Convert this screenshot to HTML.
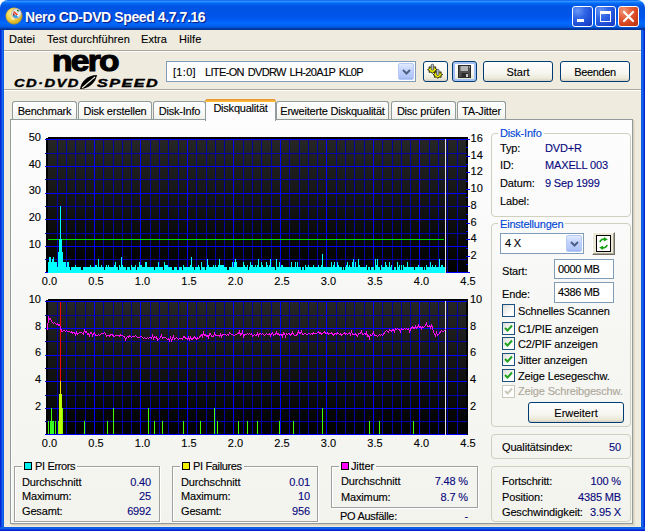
<!DOCTYPE html>
<html lang="de"><head><meta charset="utf-8"><title>Nero CD-DVD Speed 4.7.7.16</title>
<style>
html,body{margin:0;padding:0;background:#fff;}
body{width:645px;height:531px;overflow:hidden;position:relative;font-family:"Liberation Sans",sans-serif;font-size:11px;color:#000;-webkit-text-stroke:0.12px currentColor;}
.abs,#win *{position:absolute;box-sizing:border-box;white-space:nowrap;}
#win{position:absolute;left:0;top:0;width:645px;height:531px;background:#efebdf;border-radius:8px 8px 0 0;overflow:hidden;}
#title{left:0;top:0;width:645px;height:30px;background:linear-gradient(to bottom,#0058ee 0%,#3593ff 4%,#288eff 6%,#127dff 8%,#036ffc 10%,#0262ee 14%,#0057e5 20%,#0054e3 24%,#0055eb 56%,#005bf5 66%,#026afe 76%,#0062ef 86%,#0052d6 92%,#0040ab 94%,#003092 100%);}
#ttext{-webkit-text-stroke:0;left:25px;top:9px;color:#fff;font-weight:bold;font-size:14px;line-height:16px;text-shadow:1px 1px 1px #0a1883;letter-spacing:-0.4px;}
.bl{left:0;top:30px;width:4px;height:501px;background:linear-gradient(to right,#0019cf,#0831d9 25%,#166aee 60%,#0855dd);}
.br{right:0;top:30px;width:4px;height:501px;background:linear-gradient(to left,#0019cf,#0831d9 25%,#166aee 60%,#0855dd);}
.bb{left:0;top:527px;width:645px;height:4px;background:linear-gradient(to bottom,#0855dd,#166aee 30%,#0831d9 70%,#0019cf);}
.wb{top:6px;width:21px;height:21px;border:1px solid #fff;border-radius:3px;background:radial-gradient(circle at 25% 20%,#6a96f4 0%,#3268e6 35%,#1f50d8 65%,#1438b8 100%);}
.wb.close{background:radial-gradient(circle at 25% 20%,#f09878 0%,#e4603c 35%,#d6451f 65%,#b43010 100%);}
.menu{top:30px;height:20px;line-height:19px;font-size:11px;letter-spacing:0.06px;}
.hr{left:4px;width:637px;height:2px;border-top:1px solid #aca899;border-bottom:1px solid #fff;}
.btn{border:1px solid #003c74;border-radius:3px;background:linear-gradient(to bottom,#fff 0%,#f6f5ef 60%,#ece9d8 86%,#d6d0c5 100%);text-align:center;line-height:20px;font-size:11px;}
.combo{border:1px solid #7f9db9;background:#fff;}
.dd{width:16px;background:linear-gradient(to bottom,#e1eafe,#c3d3fd 40%,#b0c4f8 90%,#98b0ee);border:1px solid #b7c9f5;border-radius:2px;}
.tab{top:101px;height:19px;border:1px solid #919b9c;border-bottom:none;border-radius:3px 3px 0 0;background:linear-gradient(to bottom,#fff,#fafaf9 50%,#f0f0ea);text-align:center;line-height:18px;font-size:11px;letter-spacing:-0.22px;}
.tab.sel{top:99px;height:22px;background:#fcfcfe;border-top:none;line-height:19px;z-index:3;}
.tab.sel:before{content:"";position:absolute;left:-1px;right:-1px;top:0;height:3px;background:linear-gradient(to bottom,#e68b2c,#ffc73c);border-radius:3px 3px 0 0;}
#panel{left:10px;top:119px;width:623px;height:405px;border:1px solid #919b9c;border-right-color:#919b9c;background:linear-gradient(to bottom,#fdfdfe 0%,#fafafa 25%,#f7f7f5 45%,#f3f3ee 100%);box-shadow:inset 1px 0 0 #fff,1px 1px 0 #d8d2bd, 2px 2px 0 #e3dfce;}
.gb{border:1px solid #d0d0bf;border-radius:4px;}
.gbc{border:1px solid #a0a0a0;box-shadow:1px 1px 0 #fff, inset 1px 1px 0 #fff;}
.lg{color:#0046d5;font-size:11px;line-height:13px;padding:0 2px;letter-spacing:-0.2px;}
.t{font-size:11px;line-height:13px;letter-spacing:-0.15px;}
.v{font-size:11px;line-height:13px;color:#08087c;letter-spacing:-0.15px;}
.r{text-align:right;}
.cb{width:13px;height:13px;border:1px solid #1c5180;background:linear-gradient(135deg,#dcdcd7,#fff 70%);}
.sw{width:8px;height:8px;border:1px solid #000;}
</style></head><body>
<div id="win">
<div id="title"></div>
<div id="ttext">Nero CD-DVD Speed 4.7.7.16</div>
<svg class="abs" style="left:5px;top:7px" width="18" height="18" viewBox="0 0 18 18"><defs><radialGradient id="gd" cx=".4" cy=".35" r=".7"><stop offset="0" stop-color="#fff4a8"/><stop offset=".55" stop-color="#f0d040"/><stop offset="1" stop-color="#c8a018"/></radialGradient></defs><circle cx="9" cy="9" r="8.2" fill="url(#gd)" stroke="#b89018" stroke-width=".8" stroke-dasharray="1.6 1"/><circle cx="8" cy="11" r="2" fill="#f8eeb0"/><circle cx="11.4" cy="6.6" r="4.8" fill="#e8e8ec" stroke="#a8a8b0" stroke-width=".8"/><path d="M7.6 8.2a4 4 0 0 0 7.6 0z" fill="#2a9be8"/><path d="M8.6 4.6l5 4.4" stroke="#e84820" stroke-width="1.6"/><circle cx="13.3" cy="8.6" r="1.2" fill="#fff"/><path d="M12 3.4l2 .8" stroke="#208030" stroke-width="1.4"/><path d="M8.4 6.6l.8 2" stroke="#901010" stroke-width="1.4"/></svg>
<div class="wb" style="left:572px"><div style="left:4px;top:12px;width:7px;height:3px;background:#fff"></div></div>
<div class="wb" style="left:595px"><div style="left:4px;top:4px;width:11px;height:11px;border:1px solid #fff;border-top-width:3px"></div></div>
<div class="wb close" style="left:618px"><svg style="left:3px;top:3px" width="13" height="13" viewBox="0 0 13 13"><path d="M2 2l9 9M11 2l-9 9" stroke="#fff" stroke-width="2.2" stroke-linecap="round"/></svg></div>
<div class="bl"></div><div class="br"></div><div class="bb"></div>

<div class="menu" style="left:9px">Datei</div>
<div class="menu" style="left:47px">Test durchführen</div>
<div class="menu" style="left:141px">Extra</div>
<div class="menu" style="left:179px">Hilfe</div>
<div class="hr" style="top:50px"></div>
<div class="hr" style="top:89px"></div>

<!-- logo -->
<div id="nero" style="left:52px;top:46px;font-size:30px;font-weight:bold;letter-spacing:-1.6px;line-height:30px;-webkit-text-stroke:1.1px #000;transform-origin:0 0;transform:scaleX(1.12);">nero</div>
<div id="cds" style="left:14px;top:77px;font-size:11.5px;font-weight:bold;font-style:italic;line-height:13px;letter-spacing:1.1px;-webkit-text-stroke:0.4px #000;transform-origin:0 0;transform:scaleX(1.28);">CD·DVD</div>
<svg class="abs" style="left:79px;top:74px" width="19" height="16" viewBox="0 0 19 16"><path d="M1 15C2 8 8 1 18 1 17 8 10 15 1 15z" fill="#000"/><path d="M3 14C7 11 12 6 16 3" stroke="#ece9d8" stroke-width="1.2" fill="none"/></svg>
<div id="spd" style="left:97px;top:77px;font-size:11.5px;font-weight:bold;font-style:italic;line-height:13px;letter-spacing:1.1px;-webkit-text-stroke:0.4px #000;transform-origin:0 0;transform:scaleX(1.4);">SPEED</div>

<!-- toolbar -->
<div class="combo" style="left:166px;top:61px;width:250px;height:21px;"><div style="left:6px;top:4px;font-size:11px;line-height:13px;letter-spacing:0.3px">[1:0]</div><div style="left:38px;top:4px;font-size:11px;line-height:13px;letter-spacing:-0.65px;word-spacing:1.4px">LITE-ON DVDRW LH-20A1P KL0P</div>
<div class="dd" style="right:1px;top:1px;height:17px"><svg style="left:3px;top:5px" width="9" height="6" viewBox="0 0 9 6"><path d="M1 1l3.5 3.5L8 1" fill="none" stroke="#4d6185" stroke-width="2"/></svg></div></div>
<div class="btn" style="left:423px;top:61px;width:25px;height:21px"><svg style="left:-1px;top:0px" width="23" height="19" viewBox="0 0 23 19"><polygon points="14.2,7.6 12.4,8.6 12.8,10.3 10.6,10.0 9.4,11.4 8.2,10.0 6.0,10.3 6.4,8.6 4.6,7.6 6.4,6.6 6.0,4.9 8.2,5.2 9.4,3.8 10.6,5.2 12.8,4.9 12.4,6.6" fill="#f4f000" stroke="#1a1a00" stroke-width="0.9" stroke-linejoin="round"/><rect x="8.2" y="2.2" width="2.4" height="6" rx="1" fill="#b8bcc8" stroke="#30343c" stroke-width=".7"/><polygon points="19.6,12.6 17.8,13.6 18.2,15.3 16.0,15.0 14.8,16.4 13.6,15.0 11.4,15.3 11.8,13.6 10.0,12.6 11.8,11.6 11.4,9.9 13.6,10.2 14.8,8.8 16.0,10.2 18.2,9.9 17.8,11.6" fill="#f4f000" stroke="#1a1a00" stroke-width="0.9" stroke-linejoin="round"/><rect x="13.6" y="7.4" width="2.4" height="6" rx="1" fill="#b8bcc8" stroke="#30343c" stroke-width=".7"/></svg></div>
<div class="btn" style="left:452px;top:61px;width:25px;height:21px;box-shadow:inset 0 0 0 2px #a6c0f4"><svg style="left:5px;top:3px" width="14" height="14" viewBox="0 0 14 14"><rect x=".5" y=".5" width="12" height="12" fill="#505050" stroke="#2a2a2a"/><rect x="2.5" y="1" width="7.5" height="5" fill="#b4b4b4"/><rect x="3.5" y="8" width="7" height="4.5" fill="#2c2c2c"/><rect x="8" y="9" width="2" height="3" fill="#c8c8c8"/><rect x="11" y="1.5" width="1" height="1" fill="#ddd"/></svg></div>
<div class="btn" style="left:483px;top:61px;width:70px;height:21px">Start</div>
<div class="btn" style="left:560px;top:61px;width:70px;height:21px;letter-spacing:-0.35px">Beenden</div>

<!-- tabs -->
<div class="tab" style="left:12px;width:65px">Benchmark</div>
<div class="tab" style="left:78px;width:74px">Disk erstellen</div>
<div class="tab" style="left:153px;width:53px">Disk-Info</div>
<div class="tab" style="left:276px;width:113px">Erweiterte Diskqualität</div>
<div class="tab" style="left:391px;width:65px">Disc prüfen</div>
<div class="tab" style="left:457px;width:49px">TA-Jitter</div>
<div id="panel"></div>
<div class="tab sel" style="left:205px;width:71px">Diskqualität</div>

<svg id="charts" width="645" height="531" viewBox="0 0 645 531" style="position:absolute;left:0;top:0" font-family="Liberation Sans, sans-serif" font-size="11px" fill="#000">
<defs>
<linearGradient id="cg1" x1="0" y1="0" x2="0" y2="1"><stop offset="0" stop-color="#262626"/><stop offset="1" stop-color="#000"/></linearGradient>
</defs>
<g shape-rendering="crispEdges">
<path d="M48 137 H468 V273 H46 V138 H48z" fill="#000"/><rect x="48" y="139" width="418" height="134" fill="url(#cg1)"/>
<line x1="57.5" y1="139" x2="57.5" y2="273" stroke="#0000a4"/>
<line x1="66.5" y1="139" x2="66.5" y2="273" stroke="#0000a4"/>
<line x1="75.5" y1="139" x2="75.5" y2="273" stroke="#0000a4"/>
<line x1="85.5" y1="139" x2="85.5" y2="273" stroke="#0000a4"/>
<line x1="94.5" y1="139" x2="94.5" y2="273" stroke="#0000ff"/>
<line x1="103.5" y1="139" x2="103.5" y2="273" stroke="#0000a4"/>
<line x1="113.5" y1="139" x2="113.5" y2="273" stroke="#0000a4"/>
<line x1="122.5" y1="139" x2="122.5" y2="273" stroke="#0000a4"/>
<line x1="131.5" y1="139" x2="131.5" y2="273" stroke="#0000a4"/>
<line x1="140.5" y1="139" x2="140.5" y2="273" stroke="#0000ff"/>
<line x1="150.5" y1="139" x2="150.5" y2="273" stroke="#0000a4"/>
<line x1="159.5" y1="139" x2="159.5" y2="273" stroke="#0000a4"/>
<line x1="168.5" y1="139" x2="168.5" y2="273" stroke="#0000a4"/>
<line x1="178.5" y1="139" x2="178.5" y2="273" stroke="#0000a4"/>
<line x1="187.5" y1="139" x2="187.5" y2="273" stroke="#0000ff"/>
<line x1="196.5" y1="139" x2="196.5" y2="273" stroke="#0000a4"/>
<line x1="206.5" y1="139" x2="206.5" y2="273" stroke="#0000a4"/>
<line x1="215.5" y1="139" x2="215.5" y2="273" stroke="#0000a4"/>
<line x1="224.5" y1="139" x2="224.5" y2="273" stroke="#0000a4"/>
<line x1="233.5" y1="139" x2="233.5" y2="273" stroke="#0000ff"/>
<line x1="243.5" y1="139" x2="243.5" y2="273" stroke="#0000a4"/>
<line x1="252.5" y1="139" x2="252.5" y2="273" stroke="#0000a4"/>
<line x1="261.5" y1="139" x2="261.5" y2="273" stroke="#0000a4"/>
<line x1="271.5" y1="139" x2="271.5" y2="273" stroke="#0000a4"/>
<line x1="280.5" y1="139" x2="280.5" y2="273" stroke="#0000ff"/>
<line x1="289.5" y1="139" x2="289.5" y2="273" stroke="#0000a4"/>
<line x1="299.5" y1="139" x2="299.5" y2="273" stroke="#0000a4"/>
<line x1="308.5" y1="139" x2="308.5" y2="273" stroke="#0000a4"/>
<line x1="317.5" y1="139" x2="317.5" y2="273" stroke="#0000a4"/>
<line x1="326.5" y1="139" x2="326.5" y2="273" stroke="#0000ff"/>
<line x1="336.5" y1="139" x2="336.5" y2="273" stroke="#0000a4"/>
<line x1="345.5" y1="139" x2="345.5" y2="273" stroke="#0000a4"/>
<line x1="354.5" y1="139" x2="354.5" y2="273" stroke="#0000a4"/>
<line x1="364.5" y1="139" x2="364.5" y2="273" stroke="#0000a4"/>
<line x1="373.5" y1="139" x2="373.5" y2="273" stroke="#0000ff"/>
<line x1="382.5" y1="139" x2="382.5" y2="273" stroke="#0000a4"/>
<line x1="392.5" y1="139" x2="392.5" y2="273" stroke="#0000a4"/>
<line x1="401.5" y1="139" x2="401.5" y2="273" stroke="#0000a4"/>
<line x1="410.5" y1="139" x2="410.5" y2="273" stroke="#0000a4"/>
<line x1="419.5" y1="139" x2="419.5" y2="273" stroke="#0000ff"/>
<line x1="429.5" y1="139" x2="429.5" y2="273" stroke="#0000a4"/>
<line x1="438.5" y1="139" x2="438.5" y2="273" stroke="#0000a4"/>
<line x1="447.5" y1="139" x2="447.5" y2="273" stroke="#0000a4"/>
<line x1="457.5" y1="139" x2="457.5" y2="273" stroke="#0000a4"/>
<line x1="45" y1="139.5" x2="467" y2="139.5" stroke="#0000ff"/>
<line x1="45" y1="153.5" x2="467" y2="153.5" stroke="#0000a4"/>
<line x1="45" y1="166.5" x2="467" y2="166.5" stroke="#0000ff"/>
<line x1="45" y1="179.5" x2="467" y2="179.5" stroke="#0000a4"/>
<line x1="45" y1="193.5" x2="467" y2="193.5" stroke="#0000ff"/>
<line x1="45" y1="206.5" x2="467" y2="206.5" stroke="#0000a4"/>
<line x1="45" y1="219.5" x2="467" y2="219.5" stroke="#0000ff"/>
<line x1="45" y1="233.5" x2="467" y2="233.5" stroke="#0000a4"/>
<line x1="45" y1="246.5" x2="467" y2="246.5" stroke="#0000ff"/>
<line x1="45" y1="259.5" x2="467" y2="259.5" stroke="#0000a4"/>
<line x1="45" y1="272.5" x2="467" y2="272.5" stroke="#0000ff"/>
<line x1="466" y1="139.5" x2="470" y2="139.5" stroke="#0000ff"/><line x1="466" y1="147.5" x2="468" y2="147.5" stroke="#0000ff"/><line x1="466" y1="156.5" x2="470" y2="156.5" stroke="#0000ff"/><line x1="466" y1="164.5" x2="468" y2="164.5" stroke="#0000ff"/><line x1="466" y1="172.5" x2="470" y2="172.5" stroke="#0000ff"/><line x1="466" y1="181.5" x2="468" y2="181.5" stroke="#0000ff"/><line x1="466" y1="189.5" x2="470" y2="189.5" stroke="#0000ff"/><line x1="466" y1="197.5" x2="468" y2="197.5" stroke="#0000ff"/><line x1="466" y1="206.5" x2="470" y2="206.5" stroke="#0000ff"/><line x1="466" y1="214.5" x2="468" y2="214.5" stroke="#0000ff"/><line x1="466" y1="223.5" x2="470" y2="223.5" stroke="#0000ff"/><line x1="466" y1="231.5" x2="468" y2="231.5" stroke="#0000ff"/><line x1="466" y1="239.5" x2="470" y2="239.5" stroke="#0000ff"/><line x1="466" y1="248.5" x2="468" y2="248.5" stroke="#0000ff"/><line x1="466" y1="256.5" x2="470" y2="256.5" stroke="#0000ff"/><line x1="466" y1="264.5" x2="468" y2="264.5" stroke="#0000ff"/><line x1="466" y1="272.5" x2="470" y2="272.5" stroke="#0000ff"/>
<line x1="48" y1="239.5" x2="444" y2="239.5" stroke="#00e000"/>
<path d="M48 273 v-11 M49 273 v-16 M50 273 v-16 M51 273 v-11 M52 273 v-14 M53 273 v-16 M54 273 v-11 M55 273 v-11 M56 273 v-11 M57 273 v-6 M58 273 v-21 M59 273 v-34 M60 273 v-67 M61 273 v-34 M62 273 v-21 M63 273 v-11 M64 273 v-11 M65 273 v-11 M66 273 v-6 M67 273 v-11 M68 273 v-11 M69 273 v-6 M70 273 v-3 M71 273 v-6 M72 273 v-6 M73 273 v-6 M74 273 v-6 M75 273 v-8 M76 273 v-6 M77 273 v-6 M78 273 v-6 M79 273 v-6 M80 273 v-6 M81 273 v-3 M82 273 v-3 M83 273 v-6 M84 273 v-6 M85 273 v-6 M86 273 v-6 M87 273 v-6 M88 273 v-6 M89 273 v-6 M90 273 v-8 M91 273 v-6 M92 273 v-6 M93 273 v-6 M94 273 v-6 M95 273 v-8 M96 273 v-8 M97 273 v-6 M98 273 v-14 M99 273 v-6 M100 273 v-6 M101 273 v-8 M102 273 v-6 M103 273 v-6 M104 273 v-3 M105 273 v-6 M106 273 v-8 M107 273 v-6 M108 273 v-8 M109 273 v-6 M110 273 v-6 M111 273 v-6 M112 273 v-6 M113 273 v-6 M114 273 v-8 M115 273 v-11 M116 273 v-6 M117 273 v-6 M118 273 v-3 M119 273 v-8 M120 273 v-6 M121 273 v-16 M122 273 v-8 M123 273 v-6 M124 273 v-6 M125 273 v-6 M126 273 v-3 M127 273 v-6 M128 273 v-6 M129 273 v-6 M130 273 v-3 M131 273 v-8 M132 273 v-6 M133 273 v-6 M134 273 v-6 M135 273 v-8 M136 273 v-3 M137 273 v-6 M138 273 v-6 M139 273 v-11 M140 273 v-8 M141 273 v-8 M142 273 v-6 M143 273 v-6 M144 273 v-6 M145 273 v-11 M146 273 v-11 M147 273 v-6 M148 273 v-6 M149 273 v-6 M150 273 v-6 M151 273 v-6 M152 273 v-6 M153 273 v-6 M154 273 v-3 M155 273 v-6 M156 273 v-6 M157 273 v-6 M158 273 v-11 M159 273 v-6 M160 273 v-6 M161 273 v-6 M162 273 v-6 M163 273 v-3 M164 273 v-11 M165 273 v-8 M166 273 v-8 M167 273 v-8 M168 273 v-6 M169 273 v-6 M170 273 v-6 M171 273 v-6 M172 273 v-3 M173 273 v-3 M174 273 v-6 M175 273 v-6 M176 273 v-6 M177 273 v-3 M178 273 v-3 M179 273 v-6 M180 273 v-6 M181 273 v-6 M182 273 v-3 M183 273 v-8 M184 273 v-6 M185 273 v-6 M186 273 v-6 M187 273 v-6 M188 273 v-6 M189 273 v-6 M190 273 v-8 M191 273 v-16 M192 273 v-6 M193 273 v-6 M194 273 v-3 M195 273 v-6 M196 273 v-6 M197 273 v-6 M198 273 v-8 M199 273 v-6 M200 273 v-3 M201 273 v-11 M202 273 v-6 M203 273 v-6 M204 273 v-6 M205 273 v-3 M206 273 v-6 M207 273 v-14 M208 273 v-8 M209 273 v-6 M210 273 v-6 M211 273 v-6 M212 273 v-6 M213 273 v-8 M214 273 v-6 M215 273 v-8 M216 273 v-6 M217 273 v-6 M218 273 v-8 M219 273 v-14 M220 273 v-8 M221 273 v-8 M222 273 v-8 M223 273 v-8 M224 273 v-6 M225 273 v-6 M226 273 v-6 M227 273 v-3 M228 273 v-3 M229 273 v-6 M230 273 v-6 M231 273 v-6 M232 273 v-11 M233 273 v-6 M234 273 v-11 M235 273 v-14 M236 273 v-11 M237 273 v-6 M238 273 v-6 M239 273 v-6 M240 273 v-6 M241 273 v-6 M242 273 v-6 M243 273 v-11 M244 273 v-8 M245 273 v-6 M246 273 v-6 M247 273 v-8 M248 273 v-3 M249 273 v-6 M250 273 v-11 M251 273 v-8 M252 273 v-8 M253 273 v-6 M254 273 v-6 M255 273 v-8 M256 273 v-6 M257 273 v-8 M258 273 v-14 M259 273 v-6 M260 273 v-6 M261 273 v-11 M262 273 v-8 M263 273 v-6 M264 273 v-6 M265 273 v-6 M266 273 v-11 M267 273 v-8 M268 273 v-6 M269 273 v-8 M270 273 v-14 M271 273 v-6 M272 273 v-6 M273 273 v-6 M274 273 v-6 M275 273 v-3 M276 273 v-14 M277 273 v-6 M278 273 v-6 M279 273 v-11 M280 273 v-6 M281 273 v-8 M282 273 v-8 M283 273 v-6 M284 273 v-6 M285 273 v-6 M286 273 v-6 M287 273 v-6 M288 273 v-6 M289 273 v-6 M290 273 v-6 M291 273 v-11 M292 273 v-6 M293 273 v-6 M294 273 v-6 M295 273 v-11 M296 273 v-6 M297 273 v-11 M298 273 v-6 M299 273 v-6 M300 273 v-6 M301 273 v-3 M302 273 v-6 M303 273 v-6 M304 273 v-3 M305 273 v-8 M306 273 v-6 M307 273 v-6 M308 273 v-8 M309 273 v-6 M310 273 v-6 M311 273 v-6 M312 273 v-6 M313 273 v-8 M314 273 v-6 M315 273 v-6 M316 273 v-6 M317 273 v-6 M318 273 v-8 M319 273 v-6 M320 273 v-6 M321 273 v-8 M322 273 v-19 M323 273 v-6 M324 273 v-6 M325 273 v-6 M326 273 v-6 M327 273 v-6 M328 273 v-6 M329 273 v-6 M330 273 v-6 M331 273 v-11 M332 273 v-6 M333 273 v-8 M334 273 v-11 M335 273 v-6 M336 273 v-6 M337 273 v-11 M338 273 v-8 M339 273 v-6 M340 273 v-6 M341 273 v-6 M342 273 v-3 M343 273 v-6 M344 273 v-3 M345 273 v-6 M346 273 v-8 M347 273 v-11 M348 273 v-6 M349 273 v-8 M350 273 v-6 M351 273 v-6 M352 273 v-11 M353 273 v-14 M354 273 v-6 M355 273 v-11 M356 273 v-6 M357 273 v-6 M358 273 v-14 M359 273 v-8 M360 273 v-6 M361 273 v-6 M362 273 v-6 M363 273 v-6 M364 273 v-6 M365 273 v-6 M366 273 v-8 M367 273 v-3 M368 273 v-6 M369 273 v-6 M370 273 v-3 M371 273 v-6 M372 273 v-6 M373 273 v-6 M374 273 v-3 M375 273 v-14 M376 273 v-8 M377 273 v-14 M378 273 v-6 M379 273 v-6 M380 273 v-3 M381 273 v-8 M382 273 v-6 M383 273 v-6 M384 273 v-6 M385 273 v-11 M386 273 v-8 M387 273 v-6 M388 273 v-6 M389 273 v-11 M390 273 v-6 M391 273 v-8 M392 273 v-3 M393 273 v-3 M394 273 v-6 M395 273 v-6 M396 273 v-3 M397 273 v-11 M398 273 v-6 M399 273 v-8 M400 273 v-3 M401 273 v-8 M402 273 v-3 M403 273 v-8 M404 273 v-6 M405 273 v-6 M406 273 v-6 M407 273 v-11 M408 273 v-6 M409 273 v-6 M410 273 v-6 M411 273 v-6 M412 273 v-6 M413 273 v-6 M414 273 v-3 M415 273 v-6 M416 273 v-6 M417 273 v-6 M418 273 v-8 M419 273 v-6 M420 273 v-6 M421 273 v-6 M422 273 v-6 M423 273 v-3 M424 273 v-6 M425 273 v-3 M426 273 v-8 M427 273 v-6 M428 273 v-6 M429 273 v-6 M430 273 v-11 M431 273 v-6 M432 273 v-8 M433 273 v-6 M434 273 v-6 M435 273 v-8 M436 273 v-6 M437 273 v-6 M438 273 v-6 M439 273 v-14 M440 273 v-6 M441 273 v-8 M442 273 v-8 M443 273 v-6 M444 273 v-6 M445 273 v-6" stroke="#00ffff" stroke-width="1" transform="translate(0.5,0)" shape-rendering="crispEdges"/>
<line x1="445.5" y1="139" x2="445.5" y2="273" stroke="#e0e0e0"/>
<path d="M48 299 H468 V435 H46 V300 H48z" fill="#000"/><rect x="48" y="301" width="418" height="134" fill="url(#cg1)"/>
<line x1="57.5" y1="301" x2="57.5" y2="435" stroke="#0000a4"/>
<line x1="66.5" y1="301" x2="66.5" y2="435" stroke="#0000a4"/>
<line x1="75.5" y1="301" x2="75.5" y2="435" stroke="#0000a4"/>
<line x1="85.5" y1="301" x2="85.5" y2="435" stroke="#0000a4"/>
<line x1="94.5" y1="301" x2="94.5" y2="435" stroke="#0000ff"/>
<line x1="103.5" y1="301" x2="103.5" y2="435" stroke="#0000a4"/>
<line x1="113.5" y1="301" x2="113.5" y2="435" stroke="#0000a4"/>
<line x1="122.5" y1="301" x2="122.5" y2="435" stroke="#0000a4"/>
<line x1="131.5" y1="301" x2="131.5" y2="435" stroke="#0000a4"/>
<line x1="140.5" y1="301" x2="140.5" y2="435" stroke="#0000ff"/>
<line x1="150.5" y1="301" x2="150.5" y2="435" stroke="#0000a4"/>
<line x1="159.5" y1="301" x2="159.5" y2="435" stroke="#0000a4"/>
<line x1="168.5" y1="301" x2="168.5" y2="435" stroke="#0000a4"/>
<line x1="178.5" y1="301" x2="178.5" y2="435" stroke="#0000a4"/>
<line x1="187.5" y1="301" x2="187.5" y2="435" stroke="#0000ff"/>
<line x1="196.5" y1="301" x2="196.5" y2="435" stroke="#0000a4"/>
<line x1="206.5" y1="301" x2="206.5" y2="435" stroke="#0000a4"/>
<line x1="215.5" y1="301" x2="215.5" y2="435" stroke="#0000a4"/>
<line x1="224.5" y1="301" x2="224.5" y2="435" stroke="#0000a4"/>
<line x1="233.5" y1="301" x2="233.5" y2="435" stroke="#0000ff"/>
<line x1="243.5" y1="301" x2="243.5" y2="435" stroke="#0000a4"/>
<line x1="252.5" y1="301" x2="252.5" y2="435" stroke="#0000a4"/>
<line x1="261.5" y1="301" x2="261.5" y2="435" stroke="#0000a4"/>
<line x1="271.5" y1="301" x2="271.5" y2="435" stroke="#0000a4"/>
<line x1="280.5" y1="301" x2="280.5" y2="435" stroke="#0000ff"/>
<line x1="289.5" y1="301" x2="289.5" y2="435" stroke="#0000a4"/>
<line x1="299.5" y1="301" x2="299.5" y2="435" stroke="#0000a4"/>
<line x1="308.5" y1="301" x2="308.5" y2="435" stroke="#0000a4"/>
<line x1="317.5" y1="301" x2="317.5" y2="435" stroke="#0000a4"/>
<line x1="326.5" y1="301" x2="326.5" y2="435" stroke="#0000ff"/>
<line x1="336.5" y1="301" x2="336.5" y2="435" stroke="#0000a4"/>
<line x1="345.5" y1="301" x2="345.5" y2="435" stroke="#0000a4"/>
<line x1="354.5" y1="301" x2="354.5" y2="435" stroke="#0000a4"/>
<line x1="364.5" y1="301" x2="364.5" y2="435" stroke="#0000a4"/>
<line x1="373.5" y1="301" x2="373.5" y2="435" stroke="#0000ff"/>
<line x1="382.5" y1="301" x2="382.5" y2="435" stroke="#0000a4"/>
<line x1="392.5" y1="301" x2="392.5" y2="435" stroke="#0000a4"/>
<line x1="401.5" y1="301" x2="401.5" y2="435" stroke="#0000a4"/>
<line x1="410.5" y1="301" x2="410.5" y2="435" stroke="#0000a4"/>
<line x1="419.5" y1="301" x2="419.5" y2="435" stroke="#0000ff"/>
<line x1="429.5" y1="301" x2="429.5" y2="435" stroke="#0000a4"/>
<line x1="438.5" y1="301" x2="438.5" y2="435" stroke="#0000a4"/>
<line x1="447.5" y1="301" x2="447.5" y2="435" stroke="#0000a4"/>
<line x1="457.5" y1="301" x2="457.5" y2="435" stroke="#0000a4"/>
<line x1="45" y1="301.5" x2="467" y2="301.5" stroke="#0000ff"/>
<line x1="45" y1="315.5" x2="467" y2="315.5" stroke="#0000a4"/>
<line x1="45" y1="328.5" x2="467" y2="328.5" stroke="#0000ff"/>
<line x1="45" y1="341.5" x2="467" y2="341.5" stroke="#0000a4"/>
<line x1="45" y1="355.5" x2="467" y2="355.5" stroke="#0000ff"/>
<line x1="45" y1="368.5" x2="467" y2="368.5" stroke="#0000a4"/>
<line x1="45" y1="381.5" x2="467" y2="381.5" stroke="#0000ff"/>
<line x1="45" y1="395.5" x2="467" y2="395.5" stroke="#0000a4"/>
<line x1="45" y1="408.5" x2="467" y2="408.5" stroke="#0000ff"/>
<line x1="45" y1="421.5" x2="467" y2="421.5" stroke="#0000a4"/>
<line x1="45" y1="434.5" x2="467" y2="434.5" stroke="#0000ff"/>

<line x1="84.5" y1="434" x2="84.5" y2="421" stroke="#40ff00"/>
<line x1="107.5" y1="434" x2="107.5" y2="421" stroke="#40ff00"/>
<line x1="154.5" y1="434" x2="154.5" y2="421" stroke="#40ff00"/>
<line x1="162.5" y1="434" x2="162.5" y2="421" stroke="#40ff00"/>
<line x1="183.5" y1="434" x2="183.5" y2="421" stroke="#40ff00"/>
<line x1="200.5" y1="434" x2="200.5" y2="421" stroke="#40ff00"/>
<line x1="217.5" y1="434" x2="217.5" y2="421" stroke="#40ff00"/>
<line x1="238.5" y1="434" x2="238.5" y2="421" stroke="#40ff00"/>
<line x1="247.5" y1="434" x2="247.5" y2="421" stroke="#40ff00"/>
<line x1="257.5" y1="434" x2="257.5" y2="421" stroke="#40ff00"/>
<line x1="279.5" y1="434" x2="279.5" y2="421" stroke="#40ff00"/>
<line x1="293.5" y1="434" x2="293.5" y2="421" stroke="#40ff00"/>
<line x1="369.5" y1="434" x2="369.5" y2="421" stroke="#40ff00"/>
<line x1="379.5" y1="434" x2="379.5" y2="421" stroke="#40ff00"/>
<line x1="413.5" y1="434" x2="413.5" y2="421" stroke="#40ff00"/>
<line x1="113.5" y1="434" x2="113.5" y2="408" stroke="#40ff00"/>
<line x1="148.5" y1="434" x2="148.5" y2="408" stroke="#40ff00"/>
<line x1="214.5" y1="434" x2="214.5" y2="408" stroke="#40ff00"/>
<line x1="322.5" y1="434" x2="322.5" y2="408" stroke="#40ff00"/>
<line x1="48.5" y1="434" x2="48.5" y2="421" stroke="#40ff00"/>
<rect x="50" y="421" width="4" height="13" fill="#30ff30"/>
<line x1="51.5" y1="434" x2="51.5" y2="408" stroke="#40ff00"/>
<line x1="55.5" y1="434" x2="55.5" y2="421" stroke="#40ff00"/>
<rect x="58" y="421" width="5" height="13" fill="#80ff00"/>
<rect x="59" y="394" width="3" height="40" fill="#c0ff00"/>
<rect x="62" y="408" width="1" height="26" fill="#80ff00"/>
<line x1="60.5" y1="394" x2="60.5" y2="381" stroke="#ffe000"/>
<line x1="60.5" y1="381" x2="60.5" y2="302" stroke="#ff0000"/>
<line x1="445.5" y1="301" x2="445.5" y2="435" stroke="#e0e0e0"/>

</g>
<polyline points="47.5,330.5 48.5,316.5 49.5,319.5 50.5,318.5 51.5,321.5 52.5,322.5 53.5,323.5 54.5,322.5 55.5,323.5 56.5,324.5 57.5,323.5 58.5,325.5 59.5,324.5 60.5,327.5 61.5,331.5 62.5,331.5 63.5,330.5 64.5,330.5 65.5,331.5 66.5,330.5 67.5,331.5 68.5,331.5 69.5,331.5 70.5,332.5 71.5,331.5 72.5,333.5 73.5,332.5 74.5,332.5 75.5,334.5 76.5,332.5 77.5,334.5 78.5,333.5 79.5,332.5 80.5,332.5 81.5,332.5 82.5,333.5 83.5,334.5 84.5,330.5 85.5,332.5 86.5,331.5 87.5,334.5 88.5,333.5 89.5,335.5 90.5,332.5 91.5,332.5 92.5,335.5 93.5,333.5 94.5,332.5 95.5,335.5 96.5,335.5 97.5,335.5 98.5,334.5 99.5,335.5 100.5,334.5 101.5,333.5 102.5,333.5 103.5,333.5 104.5,332.5 105.5,333.5 106.5,336.5 107.5,335.5 108.5,335.5 109.5,336.5 110.5,334.5 111.5,334.5 112.5,334.5 113.5,336.5 114.5,336.5 115.5,335.5 116.5,335.5 117.5,335.5 118.5,335.5 119.5,336.5 120.5,334.5 121.5,335.5 122.5,335.5 123.5,336.5 124.5,336.5 125.5,339.5 126.5,337.5 127.5,336.5 128.5,337.5 129.5,335.5 130.5,336.5 131.5,337.5 132.5,336.5 133.5,336.5 134.5,336.5 135.5,335.5 136.5,336.5 137.5,337.5 138.5,337.5 139.5,337.5 140.5,336.5 141.5,336.5 142.5,337.5 143.5,338.5 144.5,337.5 145.5,338.5 146.5,338.5 147.5,337.5 148.5,338.5 149.5,337.5 150.5,337.5 151.5,338.5 152.5,335.5 153.5,338.5 154.5,336.5 155.5,337.5 156.5,336.5 157.5,340.5 158.5,339.5 159.5,338.5 160.5,337.5 161.5,335.5 162.5,338.5 163.5,337.5 164.5,337.5 165.5,337.5 166.5,338.5 167.5,339.5 168.5,338.5 169.5,340.5 170.5,337.5 171.5,340.5 172.5,338.5 173.5,336.5 174.5,339.5 175.5,338.5 176.5,337.5 177.5,338.5 178.5,339.5 179.5,338.5 180.5,338.5 181.5,338.5 182.5,339.5 183.5,336.5 184.5,336.5 185.5,338.5 186.5,338.5 187.5,339.5 188.5,337.5 189.5,339.5 190.5,337.5 191.5,339.5 192.5,339.5 193.5,337.5 194.5,336.5 195.5,338.5 196.5,339.5 197.5,337.5 198.5,338.5 199.5,337.5 200.5,335.5 201.5,334.5 202.5,336.5 203.5,332.5 204.5,335.5 205.5,334.5 206.5,336.5 207.5,335.5 208.5,337.5 209.5,333.5 210.5,333.5 211.5,336.5 212.5,336.5 213.5,336.5 214.5,333.5 215.5,335.5 216.5,335.5 217.5,335.5 218.5,335.5 219.5,336.5 220.5,334.5 221.5,336.5 222.5,334.5 223.5,334.5 224.5,334.5 225.5,334.5 226.5,335.5 227.5,334.5 228.5,335.5 229.5,332.5 230.5,333.5 231.5,334.5 232.5,334.5 233.5,335.5 234.5,335.5 235.5,334.5 236.5,334.5 237.5,333.5 238.5,333.5 239.5,331.5 240.5,335.5 241.5,334.5 242.5,331.5 243.5,336.5 244.5,334.5 245.5,334.5 246.5,334.5 247.5,333.5 248.5,334.5 249.5,333.5 250.5,334.5 251.5,333.5 252.5,336.5 253.5,335.5 254.5,334.5 255.5,335.5 256.5,335.5 257.5,333.5 258.5,335.5 259.5,333.5 260.5,333.5 261.5,334.5 262.5,333.5 263.5,334.5 264.5,335.5 265.5,334.5 266.5,333.5 267.5,334.5 268.5,334.5 269.5,333.5 270.5,335.5 271.5,333.5 272.5,332.5 273.5,335.5 274.5,334.5 275.5,334.5 276.5,332.5 277.5,334.5 278.5,333.5 279.5,335.5 280.5,334.5 281.5,334.5 282.5,336.5 283.5,332.5 284.5,333.5 285.5,336.5 286.5,333.5 287.5,334.5 288.5,333.5 289.5,333.5 290.5,335.5 291.5,334.5 292.5,332.5 293.5,334.5 294.5,335.5 295.5,335.5 296.5,335.5 297.5,333.5 298.5,331.5 299.5,333.5 300.5,333.5 301.5,331.5 302.5,334.5 303.5,334.5 304.5,333.5 305.5,333.5 306.5,334.5 307.5,334.5 308.5,333.5 309.5,333.5 310.5,334.5 311.5,333.5 312.5,334.5 313.5,332.5 314.5,333.5 315.5,333.5 316.5,333.5 317.5,332.5 318.5,331.5 319.5,333.5 320.5,332.5 321.5,334.5 322.5,333.5 323.5,332.5 324.5,331.5 325.5,333.5 326.5,333.5 327.5,332.5 328.5,334.5 329.5,333.5 330.5,333.5 331.5,332.5 332.5,334.5 333.5,335.5 334.5,333.5 335.5,333.5 336.5,334.5 337.5,332.5 338.5,333.5 339.5,334.5 340.5,333.5 341.5,335.5 342.5,334.5 343.5,333.5 344.5,332.5 345.5,334.5 346.5,333.5 347.5,334.5 348.5,333.5 349.5,332.5 350.5,334.5 351.5,331.5 352.5,334.5 353.5,334.5 354.5,334.5 355.5,333.5 356.5,335.5 357.5,336.5 358.5,333.5 359.5,333.5 360.5,333.5 361.5,331.5 362.5,334.5 363.5,334.5 364.5,333.5 365.5,334.5 366.5,332.5 367.5,336.5 368.5,335.5 369.5,338.5 370.5,334.5 371.5,335.5 372.5,334.5 373.5,332.5 374.5,335.5 375.5,335.5 376.5,335.5 377.5,336.5 378.5,335.5 379.5,334.5 380.5,335.5 381.5,334.5 382.5,335.5 383.5,334.5 384.5,332.5 385.5,331.5 386.5,330.5 387.5,331.5 388.5,332.5 389.5,329.5 390.5,330.5 391.5,331.5 392.5,329.5 393.5,329.5 394.5,331.5 395.5,328.5 396.5,329.5 397.5,328.5 398.5,329.5 399.5,329.5 400.5,331.5 401.5,328.5 402.5,329.5 403.5,329.5 404.5,328.5 405.5,329.5 406.5,328.5 407.5,329.5 408.5,328.5 409.5,331.5 410.5,329.5 411.5,327.5 412.5,326.5 413.5,328.5 414.5,328.5 415.5,326.5 416.5,328.5 417.5,327.5 418.5,325.5 419.5,327.5 420.5,326.5 421.5,328.5 422.5,326.5 423.5,327.5 424.5,326.5 425.5,325.5 426.5,323.5 427.5,326.5 428.5,326.5 429.5,325.5 430.5,327.5 431.5,325.5 432.5,327.5 433.5,332.5 434.5,333.5 435.5,335.5 436.5,332.5 437.5,335.5 438.5,334.5 439.5,333.5 440.5,331.5 441.5,330.5 442.5,331.5 443.5,331.5 444.5,330.5 445.5,329.5" fill="none" stroke="#ff10f0" stroke-width="1" shape-rendering="crispEdges"/>
<g stroke="#000" stroke-width="0.12"><text x="41" y="141" text-anchor="end">50</text><text x="41" y="168" text-anchor="end">40</text><text x="41" y="194" text-anchor="end">30</text><text x="41" y="221" text-anchor="end">20</text><text x="41" y="248" text-anchor="end">10</text><text x="470.6" y="142">16</text><text x="470.6" y="159">14</text><text x="470.6" y="175">12</text><text x="470.6" y="192">10</text><text x="470.6" y="209">8</text><text x="470.6" y="226">6</text><text x="470.6" y="242">4</text><text x="470.6" y="259">2</text><text x="41" y="303" text-anchor="end">10</text><text x="41" y="330" text-anchor="end">8</text><text x="41" y="356" text-anchor="end">6</text><text x="41" y="383" text-anchor="end">4</text><text x="41" y="410" text-anchor="end">2</text><text x="470" y="303">10</text><text x="470" y="330">8</text><text x="470" y="356">6</text><text x="470" y="383">4</text><text x="470" y="410">2</text><text x="49.5" y="285" text-anchor="middle">0.0</text><text x="96.0" y="285" text-anchor="middle">0.5</text><text x="142.5" y="285" text-anchor="middle">1.0</text><text x="189.0" y="285" text-anchor="middle">1.5</text><text x="235.5" y="285" text-anchor="middle">2.0</text><text x="282.0" y="285" text-anchor="middle">2.5</text><text x="328.5" y="285" text-anchor="middle">3.0</text><text x="375.0" y="285" text-anchor="middle">3.5</text><text x="421.5" y="285" text-anchor="middle">4.0</text><text x="468.0" y="285" text-anchor="middle">4.5</text><text x="49.5" y="447" text-anchor="middle">0.0</text><text x="96.0" y="447" text-anchor="middle">0.5</text><text x="142.5" y="447" text-anchor="middle">1.0</text><text x="189.0" y="447" text-anchor="middle">1.5</text><text x="235.5" y="447" text-anchor="middle">2.0</text><text x="282.0" y="447" text-anchor="middle">2.5</text><text x="328.5" y="447" text-anchor="middle">3.0</text><text x="375.0" y="447" text-anchor="middle">3.5</text><text x="421.5" y="447" text-anchor="middle">4.0</text><text x="468.0" y="447" text-anchor="middle">4.5</text></g>
</svg>

<!-- right column -->
<div class="gb" style="left:491px;top:133px;width:140px;height:84px"></div>
<div class="lg" style="left:498px;top:127px;background:#fcfcfd">Disk-Info</div>
<div class="t" style="left:500px;top:142px">Typ:</div><div class="v" style="left:545px;top:142px">DVD+R</div>
<div class="t" style="left:500px;top:159px">ID:</div><div class="v" style="left:545px;top:159px">MAXELL 003</div>
<div class="t" style="left:500px;top:177px">Datum:</div><div class="v" style="left:545px;top:177px">9 Sep 1999</div>
<div class="t" style="left:500px;top:195px">Label:</div>

<div class="gb" style="left:491px;top:223px;width:140px;height:204px"></div>
<div class="lg" style="left:498px;top:218px;background:#fafafa">Einstellungen</div>
<div class="combo" style="left:500px;top:233px;width:84px;height:21px"><div class="t" style="left:4px;top:3px">4 X</div><div class="dd" style="right:1px;top:1px;height:17px"><svg style="left:3px;top:5px" width="9" height="6" viewBox="0 0 9 6"><path d="M1 1l3.5 3.5L8 1" fill="none" stroke="#4d6185" stroke-width="2"/></svg></div></div>
<div style="left:592px;top:232px;width:23px;height:23px;background:#ece9d8;border:1px solid;border-color:#fff #716f64 #716f64 #fff;box-shadow:inset -1px -1px 0 #aca899"><svg style="left:2px;top:2px" width="17" height="17" viewBox="0 0 17 17"><rect x="1.5" y=".5" width="14" height="16" fill="#fff" stroke="#000"/><path d="M5 7.2a3.6 3.6 0 0 1 5.4-2.6M12 9.8a3.6 3.6 0 0 1-5.4 2.6" fill="none" stroke="#18a018" stroke-width="1.7"/><path d="M9.2 2l3.6 2.6-4 1.8zM7.8 15l-3.6-2.6 4-1.8z" fill="#18a018"/></svg></div>
<div class="t" style="left:502px;top:265px">Start:</div>
<div class="combo" style="left:554px;top:259px;width:60px;height:20px"><div class="t" style="left:3px;top:3px;letter-spacing:-0.35px">0000 MB</div></div>
<div class="t" style="left:502px;top:288px">Ende:</div>
<div class="combo" style="left:554px;top:282px;width:60px;height:21px"><div class="t" style="left:3px;top:3px;letter-spacing:-0.35px">4386 MB</div></div>

<div class="cb" style="left:502px;top:304px"></div><div class="t" style="left:518px;top:305px">Schnelles Scannen</div>
<div class="cb" style="left:502px;top:322px"><svg style="left:1px;top:1px" width="9" height="9" viewBox="0 0 9 9"><path d="M1 4l2.5 2.5L8 1.5" fill="none" stroke="#21a121" stroke-width="2"/></svg></div><div class="t" style="left:518px;top:323px">C1/PIE anzeigen</div>
<div class="cb" style="left:502px;top:337px"><svg style="left:1px;top:1px" width="9" height="9" viewBox="0 0 9 9"><path d="M1 4l2.5 2.5L8 1.5" fill="none" stroke="#21a121" stroke-width="2"/></svg></div><div class="t" style="left:518px;top:338px">C2/PIF anzeigen</div>
<div class="cb" style="left:502px;top:353px"><svg style="left:1px;top:1px" width="9" height="9" viewBox="0 0 9 9"><path d="M1 4l2.5 2.5L8 1.5" fill="none" stroke="#21a121" stroke-width="2"/></svg></div><div class="t" style="left:518px;top:354px">Jitter anzeigen</div>
<div class="cb" style="left:502px;top:369px"><svg style="left:1px;top:1px" width="9" height="9" viewBox="0 0 9 9"><path d="M1 4l2.5 2.5L8 1.5" fill="none" stroke="#21a121" stroke-width="2"/></svg></div><div class="t" style="left:518px;top:370px">Zeige Lesegeschw.</div>
<div class="cb" style="left:502px;top:385px;border-color:#cac8bb;background:#fff"><svg style="left:1px;top:1px" width="9" height="9" viewBox="0 0 9 9"><path d="M1 4l2.5 2.5L8 1.5" fill="none" stroke="#cac8bb" stroke-width="2"/></svg></div><div class="t" style="left:518px;top:385px;color:#aca899">Zeige Schreibgeschw.</div>
<div class="btn" style="left:528px;top:402px;width:96px;height:21px">Erweitert</div>

<div class="gb" style="left:491px;top:434px;width:140px;height:25px"></div>
<div class="t" style="left:502px;top:441px">Qualitätsindex:</div><div class="v r" style="left:571px;width:50px;top:441px">50</div>
<div class="gb" style="left:491px;top:466px;width:140px;height:56px"></div>
<div class="t" style="left:502px;top:475px">Fortschritt:</div><div class="v r" style="left:561px;width:60px;top:475px">100 %</div>
<div class="t" style="left:502px;top:491px">Position:</div><div class="v r" style="left:561px;width:60px;top:491px">4385 MB</div>
<div class="t" style="left:502px;top:506px">Geschwindigkeit:</div><div class="v r" style="left:561px;width:60px;top:506px">3.95 X</div>

<!-- bottom stats -->
<div class="gbc" style="left:14px;top:466px;width:146px;height:56px"></div>
<div class="t" style="left:22px;top:459px;background:#f4f4f0;padding:0 2px;width:55px;height:14px"></div>
<div class="sw" style="left:24px;top:462px;background:#00f0f0"></div><div class="t" style="left:35px;top:460px;letter-spacing:-0.35px">PI Errors</div>
<div class="t" style="left:22px;top:476px">Durchschnitt</div><div class="v r" style="left:101px;width:50px;top:476px">0.40</div>
<div class="t" style="left:22px;top:490px">Maximum:</div><div class="v r" style="left:101px;width:50px;top:490px">25</div>
<div class="t" style="left:22px;top:505px">Gesamt:</div><div class="v r" style="left:101px;width:50px;top:505px">6992</div>

<div class="gbc" style="left:172px;top:466px;width:146px;height:56px"></div>
<div class="t" style="left:180px;top:459px;background:#f4f4f0;width:64px;height:14px"></div>
<div class="sw" style="left:182px;top:462px;background:#f0f000"></div><div class="t" style="left:193px;top:460px;letter-spacing:-0.35px">PI Failures</div>
<div class="t" style="left:181px;top:476px">Durchschnitt</div><div class="v r" style="left:260px;width:50px;top:476px">0.01</div>
<div class="t" style="left:181px;top:490px">Maximum:</div><div class="v r" style="left:260px;width:50px;top:490px">10</div>
<div class="t" style="left:181px;top:505px">Gesamt:</div><div class="v r" style="left:260px;width:50px;top:505px">956</div>

<div class="gbc" style="left:331px;top:466px;width:147px;height:42px"></div>
<div class="t" style="left:339px;top:459px;background:#f4f4f0;width:37px;height:14px"></div>
<div class="sw" style="left:341px;top:462px;background:#ff00ff"></div><div class="t" style="left:351px;top:460px">Jitter</div>
<div class="t" style="left:341px;top:475px">Durchschnitt</div><div class="v r" style="left:408px;width:60px;top:475px">7.48 %</div>
<div class="t" style="left:341px;top:491px">Maximum:</div><div class="v r" style="left:408px;width:60px;top:491px">8.7 %</div>
<div class="t" style="left:340px;top:510px;letter-spacing:-0.3px">PO Ausfälle:</div><div class="v r" style="left:408px;width:60px;top:510px">-</div>
</div>
</body></html>
